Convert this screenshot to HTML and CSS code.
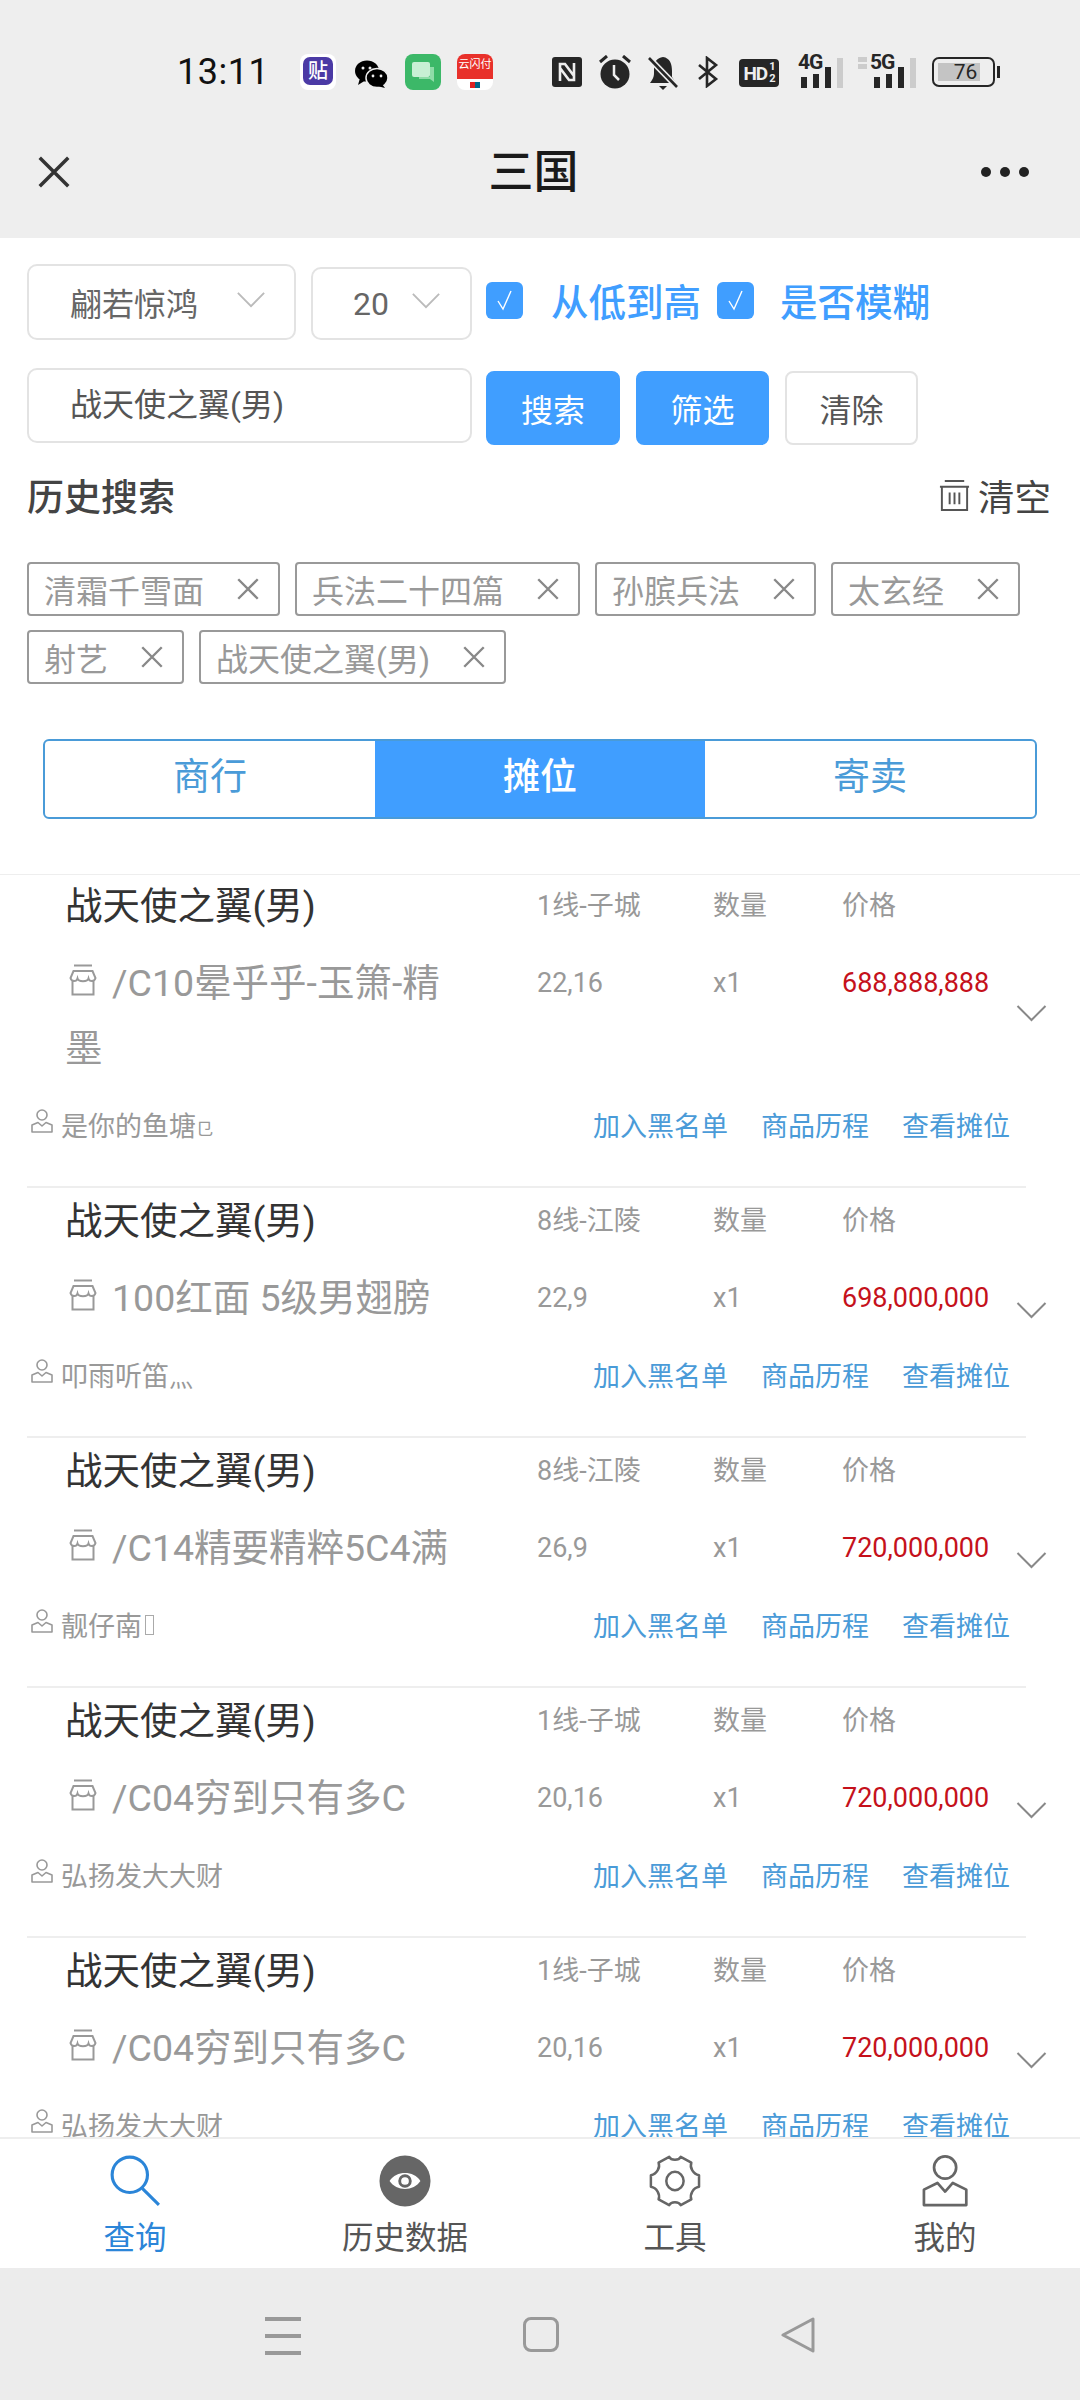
FILE: index.html
```html
<!DOCTYPE html>
<html lang="zh">

<head>
    <meta charset="UTF-8">
    <meta name="viewport" content="width=device-width, initial-scale=1.0">
    <title>三国</title>

    <link rel="stylesheet" href="styles.css">
</head>

<body>
    <svg class="defs" width="0" height="0">
        <symbol id="chev" viewBox="0 0 32 18">
            <path d="M2 2 L16 16 L30 2" fill="none" stroke="currentColor" stroke-width="2" />
        </symbol>
        <symbol id="close" viewBox="0 0 24 24">
            <path d="M3 3 L21 21 M21 3 L3 21" fill="none" stroke="currentColor" stroke-width="2.2" />
        </symbol>
        <symbol id="shop" viewBox="0 0 28 32">
            <path d="M5 1.5 H23 M4.5 7 H23.5 L26.5 14 C25.5 18 20.5 18 19.5 14.5 C18.5 18 9.5 18 8.5 14.5 C7.5 18 2.5 18 1.5 14 Z M3.5 17 V30.5 H24.5 V17" fill="none" stroke="currentColor" stroke-width="2" />
        </symbol>
        <symbol id="user" viewBox="0 0 22 24">
            <ellipse cx="11" cy="6" rx="5" ry="5" fill="none" stroke="currentColor" stroke-width="1.6" />
            <path d="M1 16 L7 13.5 L11 17 L15 13.5 L21 16 V23 H1 Z" fill="none" stroke="currentColor" stroke-width="1.6" stroke-linejoin="round" />
        </symbol>
    </svg>

    <header class="top">
        <div class="status">
            <span class="time">13:11</span>
            <span class="app app-tie"><b>贴</b></span>
            <svg class="app-wechat" viewBox="0 0 34 28">
                <ellipse cx="13" cy="11" rx="12" ry="10.5" fill="#000" />
                <path d="M6 18 L4 25 L12 20 Z" fill="#000" />
                <ellipse cx="23" cy="18" rx="11" ry="9.5" fill="#000" stroke="#eee" stroke-width="1.5" />
                <path d="M28 24 L31 28 L23 26 Z" fill="#000" />
                <circle cx="9" cy="8" r="1.5" fill="#eee" />
                <circle cx="16" cy="8" r="1.5" fill="#eee" />
                <circle cx="19" cy="16" r="1.4" fill="#eee" />
                <circle cx="27" cy="16" r="1.4" fill="#eee" />
            </svg>
            <svg class="app-msg" viewBox="0 0 36 36">
                <rect width="36" height="36" rx="8" fill="#3cb868" />
                <rect x="7" y="8" width="18" height="15" rx="2" fill="#c8f0d4" />
                <path d="M25 13 H29 V28 L25 25 H14 V23 H25 Z" fill="#8fdca8" />
            </svg>
            <span class="app app-pay"><i>云闪付</i><em></em></span>

            <svg class="st st-nfc" viewBox="0 0 30 30">
                <rect width="30" height="30" rx="3" fill="#262626" />
                <path d="M8 24 V7 H13 L22 19 M22 6 V23 H17 L8 11" fill="none" stroke="#eee" stroke-width="2.6" />
            </svg>
            <svg class="st st-alarm" viewBox="0 0 32 34">
                <circle cx="16" cy="19" r="14.5" fill="#262626" />
                <path d="M15 10 V20 L20 25" fill="none" stroke="#eee" stroke-width="2.5" />
                <path d="M1 7 L8 1 M31 7 L24 1" stroke="#262626" stroke-width="3" />
            </svg>
            <svg class="st st-bell" viewBox="0 0 30 36">
                <path d="M15 2 C22 3 24 9 24 16 V22 L28 28 H2 C4 25 6 23 6 18 V12 C6 7 9 3 15 2 Z M11 31 H19 L15 35 Z" fill="#262626" />
                <path d="M1 3 L29 32" stroke="#eee" stroke-width="6" />
                <path d="M1 3 L29 32" stroke="#262626" stroke-width="2.6" />
            </svg>
            <svg class="st st-bt" viewBox="0 0 22 32">
                <path d="M2 9 L19 23 L10 30 V2 L19 9 L2 23" fill="none" stroke="#262626" stroke-width="2.6" />
            </svg>
            <span class="st-hd">HD<span class="hd-frac"><i>1</i><i>2</i></span></span>
            <span class="signal">
                <span class="net">4G</span>
                <span class="bars"><i class="b1"></i><i class="b2"></i><i class="b3"></i><i class="b4"></i></span>
            </span>
            <span class="signal signal-5g">
                <span class="arrows"></span>
                <span class="net">5G</span>
                <span class="bars"><i class="b1"></i><i class="b2"></i><i class="b3"></i><i class="b4"></i></span>
            </span>
            <span class="battery"><span class="battery-fill"></span><span class="battery-num">76</span></span>
        </div>
        <div class="bar">
            <svg class="bar-close"><use href="#close" /></svg>
            <h1 class="bar-title">三国</h1>
            <span class="bar-dots"><i></i><i></i><i></i></span>
        </div>
    </header>

    <main class="main">
        <div class="controls">
            <div class="row row-filters">
                <div class="select select-name">
                    <span>翩若惊鸿</span>
                    <svg class="select-chev"><use href="#chev" /></svg>
                </div>
                <div class="select select-num">
                    <span>20</span>
                    <svg class="select-chev"><use href="#chev" /></svg>
                </div>
                <label class="check">
                    <svg class="check-box" viewBox="0 0 37 37">
                        <rect width="37" height="37" rx="6" fill="#409eff" />
                        <path d="M12 19 L17 27 L25 9" fill="none" stroke="#fff" stroke-width="1.4" />
                    </svg>
                    <span>从低到高</span>
                </label>
                <label class="check">
                    <svg class="check-box" viewBox="0 0 37 37">
                        <rect width="37" height="37" rx="6" fill="#409eff" />
                        <path d="M12 19 L17 27 L25 9" fill="none" stroke="#fff" stroke-width="1.4" />
                    </svg>
                    <span>是否模糊</span>
                </label>
            </div>

            <div class="row row-search">
                <div class="search-input">战天使之翼(男)</div>
                <button class="btn btn-primary">搜索</button>
                <button class="btn btn-primary">筛选</button>
                <button class="btn">清除</button>
            </div>

            <div class="history-head">
                <h2>历史搜索</h2>
                <div class="history-clear">
                    <svg viewBox="0 0 34 34">
                        <path d="M7 2 H27 M2 8 H32 M4 8 V32 H30 V8 M12 14 V26 M17 14 V26 M22 14 V26" fill="none" stroke="#555" stroke-width="2" />
                    </svg>
                    <span>清空</span>
                </div>
            </div>

            <div class="tags">
                <span class="tag">清霜千雪面<svg><use href="#close" /></svg></span>
                <span class="tag">兵法二十四篇<svg><use href="#close" /></svg></span>
                <span class="tag">孙膑兵法<svg><use href="#close" /></svg></span>
                <span class="tag">太玄经<svg><use href="#close" /></svg></span>
                <span class="tag">射艺<svg><use href="#close" /></svg></span>
                <span class="tag">战天使之翼(男)<svg><use href="#close" /></svg></span>
            </div>

            <div class="segments">
                <div class="segment">商行</div>
                <div class="segment segment-on">摊位</div>
                <div class="segment">寄卖</div>
            </div>
        </div>

        <div class="list">
            <article class="item item-tall">
                <div class="item-top">
                    <div class="item-name">
                        <h3>战天使之翼(男)</h3>
                        <p class="item-desc"><svg><use href="#shop" /></svg>/C10晕乎乎-玉箫-精墨</p>
                    </div>
                    <div class="item-col col-line"><span>1线-子城</span><span>22,16</span></div>
                    <div class="item-col col-qty"><span>数量</span><span>x1</span></div>
                    <div class="item-col col-price"><span>价格</span><span class="price">688,888,888</span></div>
                    <svg class="item-chev"><use href="#chev" /></svg>
                </div>
                <div class="item-foot">
                    <div class="seller"><svg><use href="#user" /></svg>是你的鱼塘<small>㔾</small></div>
                    <div class="actions"><a>加入黑名单</a><a>商品历程</a><a>查看摊位</a></div>
                </div>
            </article>

            <article class="item">
                <div class="item-top">
                    <div class="item-name">
                        <h3>战天使之翼(男)</h3>
                        <p class="item-desc"><svg><use href="#shop" /></svg>100红面 5级男翅膀</p>
                    </div>
                    <div class="item-col col-line"><span>8线-江陵</span><span>22,9</span></div>
                    <div class="item-col col-qty"><span>数量</span><span>x1</span></div>
                    <div class="item-col col-price"><span>价格</span><span class="price">698,000,000</span></div>
                    <svg class="item-chev"><use href="#chev" /></svg>
                </div>
                <div class="item-foot">
                    <div class="seller"><svg><use href="#user" /></svg>叩雨听笛<small class="small-wide">灬</small></div>
                    <div class="actions"><a>加入黑名单</a><a>商品历程</a><a>查看摊位</a></div>
                </div>
            </article>

            <article class="item">
                <div class="item-top">
                    <div class="item-name">
                        <h3>战天使之翼(男)</h3>
                        <p class="item-desc"><svg><use href="#shop" /></svg>/C14精要精粹5C4满</p>
                    </div>
                    <div class="item-col col-line"><span>8线-江陵</span><span>26,9</span></div>
                    <div class="item-col col-qty"><span>数量</span><span>x1</span></div>
                    <div class="item-col col-price"><span>价格</span><span class="price">720,000,000</span></div>
                    <svg class="item-chev"><use href="#chev" /></svg>
                </div>
                <div class="item-foot">
                    <div class="seller"><svg><use href="#user" /></svg>靓仔南<span class="tofu"></span></div>
                    <div class="actions"><a>加入黑名单</a><a>商品历程</a><a>查看摊位</a></div>
                </div>
            </article>

            <article class="item">
                <div class="item-top">
                    <div class="item-name">
                        <h3>战天使之翼(男)</h3>
                        <p class="item-desc"><svg><use href="#shop" /></svg>/C04穷到只有多C</p>
                    </div>
                    <div class="item-col col-line"><span>1线-子城</span><span>20,16</span></div>
                    <div class="item-col col-qty"><span>数量</span><span>x1</span></div>
                    <div class="item-col col-price"><span>价格</span><span class="price">720,000,000</span></div>
                    <svg class="item-chev"><use href="#chev" /></svg>
                </div>
                <div class="item-foot">
                    <div class="seller"><svg><use href="#user" /></svg>弘扬发大大财</div>
                    <div class="actions"><a>加入黑名单</a><a>商品历程</a><a>查看摊位</a></div>
                </div>
            </article>

            <article class="item">
                <div class="item-top">
                    <div class="item-name">
                        <h3>战天使之翼(男)</h3>
                        <p class="item-desc"><svg><use href="#shop" /></svg>/C04穷到只有多C</p>
                    </div>
                    <div class="item-col col-line"><span>1线-子城</span><span>20,16</span></div>
                    <div class="item-col col-qty"><span>数量</span><span>x1</span></div>
                    <div class="item-col col-price"><span>价格</span><span class="price">720,000,000</span></div>
                    <svg class="item-chev"><use href="#chev" /></svg>
                </div>
                <div class="item-foot">
                    <div class="seller"><svg><use href="#user" /></svg>弘扬发大大财</div>
                    <div class="actions"><a>加入黑名单</a><a>商品历程</a><a>查看摊位</a></div>
                </div>
            </article>
        </div>
    </main>

    <nav class="tabbar">
        <div class="tabbar-item tabbar-on">
            <svg viewBox="0 0 50 50">
                <circle cx="20" cy="19" r="17" fill="none" stroke="currentColor" stroke-width="3" />
                <path d="M32 32 L48 48" stroke="currentColor" stroke-width="3" />
            </svg>
            <span>查询</span>
        </div>
        <div class="tabbar-item">
            <svg viewBox="0 0 54 54">
                <circle cx="27" cy="27" r="26.5" fill="#666" />
                <path d="M11 27 C18 16 36 16 43 27 C36 38 18 38 11 27 Z" fill="#fff" />
                <circle cx="27" cy="27" r="5.5" fill="none" stroke="#666" stroke-width="3" />
            </svg>
            <span>历史数据</span>
        </div>
        <div class="tabbar-item">
            <svg viewBox="0 0 56 54">
                <path d="M22 2 C24 6 32 6 34 2 L45 8 C43 13 47 20 53 21 V33 C47 34 43 41 45 46 L34 52 C32 48 24 48 22 52 L11 46 C13 41 9 34 3 33 V21 C9 20 13 13 11 8 Z" fill="none" stroke="#666" stroke-width="2.6" stroke-linejoin="round" />
                <ellipse cx="28" cy="27" rx="9" ry="9.5" fill="none" stroke="#666" stroke-width="2.6" />
            </svg>
            <span>工具</span>
        </div>
        <div class="tabbar-item">
            <svg viewBox="0 0 48 54">
                <circle cx="24" cy="13" r="11.5" fill="none" stroke="#666" stroke-width="2.8" />
                <path d="M2 36 L16 29 L24 38 L32 29 L46 36 V52 H2 Z" fill="none" stroke="#666" stroke-width="2.8" stroke-linejoin="round" />
            </svg>
            <span>我的</span>
        </div>
    </nav>

    <footer class="sysnav">
        <span class="sys-menu"><i></i><i></i><i></i></span>
        <span class="sys-home"></span>
        <svg class="sys-back" viewBox="0 0 36 36">
            <path d="M33 2 V34 L3 18 Z" fill="none" stroke="#999" stroke-width="3" stroke-linejoin="round" />
        </svg>
    </footer>
</body>

</html>
```

FILE: styles.css
```css
* {
    box-sizing: border-box;
    margin: 0;
    padding: 0;
}

html,
body {
    height: 100%;
}

body {
    width: 1080px;
    height: 2400px;
    display: flex;
    flex-direction: column;
    overflow: hidden;
    background: #fff;
    font-family: Roboto, "Noto Sans CJK SC", sans-serif;
    color: #333;
}

i,
em {
    font-style: normal;
}

.defs {
    position: absolute;
}

/* status bar + title */
.top {
    height: 238px;
    flex: none;
    background: #eee;
}

.status {
    height: 134px;
    padding: 54px 0 0 177px;
    display: flex;
    align-items: flex-start;
}

.time {
    width: 123px;
    height: 36px;
    font-size: 36px;
    line-height: 36px;
    letter-spacing: 0.5px;
    color: #111;
}

.app {
    display: block;
    flex: none;
    width: 36px;
    height: 36px;
    border-radius: 8px;
    overflow: hidden;
}

.app-tie {
    background: #fff;
    padding: 3px;
}

.app-tie b {
    display: block;
    height: 28px;
    border-radius: 7px;
    background: #4b3aa5;
    color: #fff;
    font-size: 20px;
    line-height: 28px;
    font-weight: 500;
    text-align: center;
}

.app-wechat {
    width: 34px;
    height: 28px;
    margin: 6px 17px 0 18px;
    flex: none;
}

.app-msg {
    width: 36px;
    height: 36px;
    margin-right: 16px;
    flex: none;
}

.app-pay {
    background: #fff;
    margin-right: 59px;
}

.app-pay i {
    display: block;
    height: 25px;
    background: #e8302a;
    color: #fff;
    font-size: 11px;
    line-height: 22px;
    text-align: center;
    white-space: nowrap;
}

.app-pay em {
    display: block;
    width: 10px;
    height: 6px;
    margin: 3px auto 0;
    background: linear-gradient(90deg, #d22 50%, #068 50%);
}

.st {
    flex: none;
    display: block;
}

.st-nfc {
    width: 30px;
    height: 30px;
    margin-top: 3px;
}

.st-alarm {
    width: 32px;
    height: 34px;
    margin-left: 17px;
    margin-top: 1px;
}

.st-bell {
    width: 30px;
    height: 36px;
    margin-left: 17px;
    margin-top: 1px;
}

.st-bt {
    width: 22px;
    height: 32px;
    margin-left: 19px;
    margin-top: 2px;
}

.st-hd {
    display: flex;
    align-items: center;
    justify-content: center;
    width: 40px;
    height: 28px;
    margin: 5px 0 0 20px;
    border-radius: 4px;
    background: #262626;
    color: #eee;
    font-size: 19px;
    font-weight: 700;
    letter-spacing: -1px;
}

.hd-frac {
    display: flex;
    flex-direction: column;
    margin-left: 2px;
    font-size: 11px;
    line-height: 12px;
}

.signal {
    position: relative;
    width: 46px;
    height: 34px;
    margin-left: 19px;
    flex: none;
}

.signal-5g {
    width: 58px;
    margin-left: 14px;
}

.net {
    position: absolute;
    left: 0;
    top: -1px;
    font-size: 21px;
    line-height: 19px;
    font-weight: 700;
    color: #262626;
    letter-spacing: -1px;
}

.signal-5g .net {
    left: 12px;
}

.arrows {
    position: absolute;
    left: 0;
    top: 3px;
    width: 9px;
    height: 12px;
    background: linear-gradient(#ccc 45%, transparent 45%, transparent 55%, #ccc 55%);
}

.bars {
    position: absolute;
    left: 3px;
    bottom: 0;
    display: flex;
    align-items: flex-end;
    gap: 6px;
}

.signal-5g .bars {
    left: 16px;
}

.bars i {
    display: block;
    width: 6px;
    background: #262626;
}

.bars .b1 {
    height: 11px;
}

.bars .b2 {
    height: 14px;
}

.bars .b3 {
    height: 21px;
}

.bars .b4 {
    height: 30px;
    background: #ccc;
}

.battery {
    position: relative;
    display: flex;
    align-items: center;
    width: 63px;
    height: 30px;
    margin: 3px 0 0 16px;
    border: 2px solid #262626;
    border-radius: 7px;
}

.battery::after {
    content: "";
    position: absolute;
    right: -7px;
    top: 7px;
    width: 3px;
    height: 12px;
    background: #262626;
}

.battery-fill {
    position: absolute;
    left: 4px;
    top: 4px;
    bottom: 4px;
    width: 42px;
    background: #c4c4c4;
}

.battery-num {
    position: relative;
    width: 100%;
    padding-left: 4px;
    text-align: center;
    font-size: 21px;
    color: #262626;
}

.bar {
    position: relative;
    height: 104px;
    display: flex;
    align-items: center;
    justify-content: center;
}

.bar-close {
    position: absolute;
    left: 35px;
    top: 19px;
    width: 38px;
    height: 38px;
    color: #333;
}

.bar-title {
    font-size: 45px;
    font-weight: 500;
    line-height: 76px;
    height: 76px;
    margin: 0 13px 26px 0;
    color: #1a1a1a;
}

.bar-dots {
    position: absolute;
    right: 51px;
    top: 33px;
    display: flex;
    gap: 9px;
}

.bar-dots i {
    display: block;
    width: 10px;
    height: 10px;
    border-radius: 50%;
    background: #222;
}

/* main scroll area */
.main {
    flex: 1;
    min-height: 0;
    overflow: hidden;
}

.controls {
    padding: 26px 0 0 27px;
}

.row {
    display: flex;
}

.row-filters {
    align-items: flex-end;
    height: 76px;
}

.select {
    display: flex;
    align-items: center;
    height: 76px;
    border: 2px solid #e3e3e3;
    border-radius: 10px;
    font-size: 32px;
    color: #666;
}

.select-name {
    width: 269px;
    padding-left: 41px;
}

.select-num {
    width: 161px;
    height: 73px;
    margin-left: 15px;
    padding-left: 40px;
}

.select-chev {
    width: 30px;
    height: 17px;
    margin: -6px 0 0 38px;
    color: #bbb;
}

.select-num .select-chev {
    margin-left: 22px;
}

.check {
    display: flex;
    align-items: center;
    align-self: center;
    margin: 0 0 3px 14px;
    color: #409eff;
    font-size: 37.5px;
    font-weight: 500;
}

.check span {
    margin-top: -3px;
}

.check + .check {
    margin-left: 16px;
}

.check + .check .check-box {
    margin-right: 26px;
}

.check-box {
    width: 37px;
    height: 37px;
    margin-right: 28px;
    flex: none;
}

.row-search {
    margin-top: 28px;
    align-items: flex-start;
}

.search-input {
    width: 445px;
    height: 75px;
    padding-left: 41px;
    border: 2px solid #e3e3e3;
    border-radius: 10px;
    font-size: 32px;
    line-height: 71px;
    color: #555;
}

.btn {
    width: 133px;
    height: 74px;
    margin: 3px 0 0 16px;
    border: 2px solid #e3e3e3;
    border-radius: 8px;
    background: #fff;
    color: #555;
    font-family: inherit;
    font-size: 32px;
}

.search-input + .btn {
    width: 134px;
    margin-left: 14px;
}

.btn-primary {
    border-color: #409eff;
    background: #409eff;
    color: #fff;
}

.history-head {
    display: flex;
    justify-content: space-between;
    align-items: center;
    height: 50px;
    margin-top: 25px;
    padding-right: 29px;
}

.history-head h2 {
    font-size: 37px;
    font-weight: 500;
    color: #444;
}

.history-clear {
    display: flex;
    align-items: center;
    gap: 7px;
    font-size: 36.5px;
    color: #444;
}

.history-clear svg {
    width: 33px;
    height: 33px;
}

.tags {
    display: flex;
    flex-wrap: wrap;
    gap: 14px 15px;
    width: 1015px;
    margin-top: 42px;
}

.tag {
    display: flex;
    align-items: center;
    height: 54px;
    padding: 0 17px 0 15px;
    border: 2px solid #999;
    border-radius: 4px;
    font-size: 32px;
    color: #999;
}

.tag svg {
    width: 26px;
    height: 26px;
    margin-left: 31px;
    color: #888;
}

.segments {
    display: flex;
    width: 994px;
    height: 80px;
    margin: 55px 0 55px 16px;
    border: 2px solid #4a9bd8;
    border-radius: 6px;
    overflow: hidden;
}

.segment {
    flex: 1;
    text-align: center;
    font-size: 37px;
    line-height: 74px;
    color: #4a9bd8;
}

.segment-on {
    background: #409eff;
    color: #fff;
    font-weight: 500;
}

/* stall list */
.list {
    border-top: 1px solid #eee;
}

.item {
    width: 999px;
    margin-left: 27px;
    border-bottom: 2px solid #eee;
    padding-bottom: 37px;
}

.item + .item {
    padding-top: 2px;
}

.item-top {
    display: flex;
    padding-left: 38px;
}

.item-name {
    width: 472px;
    flex: none;
}

.item-name h3 {
    font-size: 37.5px;
    font-weight: 400;
    line-height: 62px;
    color: #333;
}

.item-desc {
    width: 402px;
    margin-top: 14px;
    font-size: 37.5px;
    line-height: 65px;
    color: #999;
}

.item-desc svg {
    width: 28px;
    height: 32px;
    margin: 0 15px 12px 4px;
    vertical-align: middle;
    color: #999;
}

.item-col {
    display: flex;
    flex-direction: column;
    flex: none;
    font-size: 27px;
    color: #999;
}

.item-col span {
    display: block;
    height: 62px;
    line-height: 62px;
}

.item-col span + span {
    margin-top: 14px;
    height: 65px;
    line-height: 65px;
}

.col-line {
    width: 176px;
}

.col-qty {
    width: 129px;
}

.col-price {
    width: 172px;
}

.price {
    color: #c5111b;
}

.item-chev {
    width: 35px;
    height: 18px;
    margin-top: 111px;
    color: #888;
    flex: none;
}

.item-tall .item-chev {
    margin-top: 129px;
}

.item-foot {
    display: flex;
    justify-content: space-between;
    align-items: center;
    height: 50px;
    margin-top: 18px;
    padding-left: 4px;
    padding-right: 16px;
    font-size: 27px;
}

.seller {
    display: flex;
    align-items: center;
    color: #999;
}

.seller svg {
    width: 22px;
    height: 24px;
    margin: -6px 8px 0 0;
    color: #999;
}

.seller small {
    font-size: 17px;
    margin-top: 6px;
}

.seller .small-wide {
    font-size: 24px;
    margin-top: 4px;
}

.tofu {
    width: 9px;
    height: 20px;
    margin: 2px 0 0 3px;
    border: 1px solid #aaa;
}

.actions {
    display: flex;
    gap: 33px;
    color: #4a9bd8;
}

/* bottom tabs */
.tabbar {
    height: 131px;
    flex: none;
    display: flex;
    border-top: 2px solid #eee;
    background: #fff;
}

.tabbar-item {
    flex: 1;
    display: flex;
    flex-direction: column;
    align-items: center;
    color: #555;
    font-size: 31.5px;
}

.tabbar-item svg {
    display: block;
    width: auto;
    height: 52px;
    margin-top: 16px;
}

.tabbar-item span {
    margin-top: 10px;
    line-height: 44px;
}

.tabbar-on {
    color: #2b85d8;
}

/* android nav keys */
.sysnav {
    height: 132px;
    flex: none;
    display: flex;
    align-items: flex-start;
    padding: 49px 0 0 265px;
    background: #ececec;
}

.sys-menu {
    display: flex;
    flex-direction: column;
    gap: 13px;
    width: 36px;
}

.sys-menu i {
    display: block;
    height: 4px;
    background: #999;
}

.sys-home {
    width: 36px;
    height: 35px;
    margin-left: 222px;
    border: 3px solid #999;
    border-radius: 8px;
}

.sys-back {
    width: 36px;
    height: 36px;
    margin-left: 221px;
}
```
